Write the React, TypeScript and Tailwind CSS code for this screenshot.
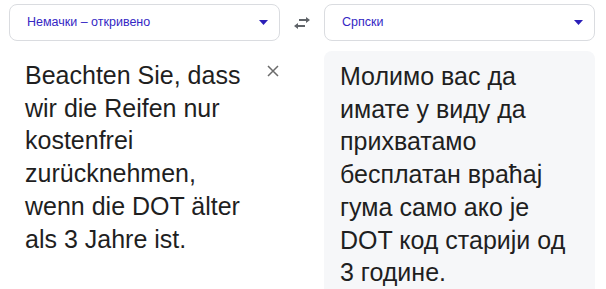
import React from 'react';

const font = { fontFamily: '"Liberation Sans", Arial, sans-serif' };

const Caret = () => (
  <svg width="9" height="5" viewBox="0 0 9 5" className="shrink-0">
    <path d="M0 0h9L4.5 5z" fill="#2b1fb8" />
  </svg>
);

const LangSelect = ({ label }: { label: string }) => (
  <div className="h-[37px] flex items-center justify-between pl-[17px] pr-[11px] border border-[#dadce0] rounded-lg bg-white">
    <span className="text-[12.5px] text-[#3527c4]">{label}</span>
    <Caret />
  </div>
);

export default function App() {
  return (
    <div className="w-[606px] h-[289px] overflow-hidden bg-white text-[#1f1f1f]" style={font}>
      <div className="grid grid-cols-[271px_44px_271px] pl-[9px] pt-[4px]">
        <div className="flex flex-col">
          <LangSelect label="Немачки – откривено" />
          <div className="mt-[10px] flex gap-3 pl-4 pr-[1px] pt-[8px]">
            <p className="flex-1 text-[25px] leading-[32.7px]">
              Beachten Sie, dass wir die Reifen nur kostenfrei zurücknehmen, wenn die DOT älter als 3 Jahre ist.
            </p>
            <button className="mt-[6px] w-3 h-3 shrink-0" aria-label="Löschen">
              <svg width="12" height="12" viewBox="0 0 12 12">
                <path d="M1 1l10 10M11 1L1 11" stroke="#6b6b6b" strokeWidth="1.5" />
              </svg>
            </button>
          </div>
        </div>
        <div className="h-[37px] flex items-center justify-center">
          <svg width="18" height="12" viewBox="0 0 18 12">
            <path d="M13 0l4 3-4 3V4H6V2h7zM5 6L1 9l4 3v-2h7V8H5z" fill="#5f6368" />
          </svg>
        </div>
        <div className="flex flex-col">
          <LangSelect label="Српски" />
          <div className="mt-[10px] rounded-lg bg-[#f6f7f9] px-4 pt-[9px] pb-4">
            <p className="text-[25px] leading-[32.7px]">
              Молимо вас да имате у виду да прихватамо бесплатан враћај гума само ако је DOT код старији од 3 године.
            </p>
          </div>
        </div>
      </div>
    </div>
  );
}
